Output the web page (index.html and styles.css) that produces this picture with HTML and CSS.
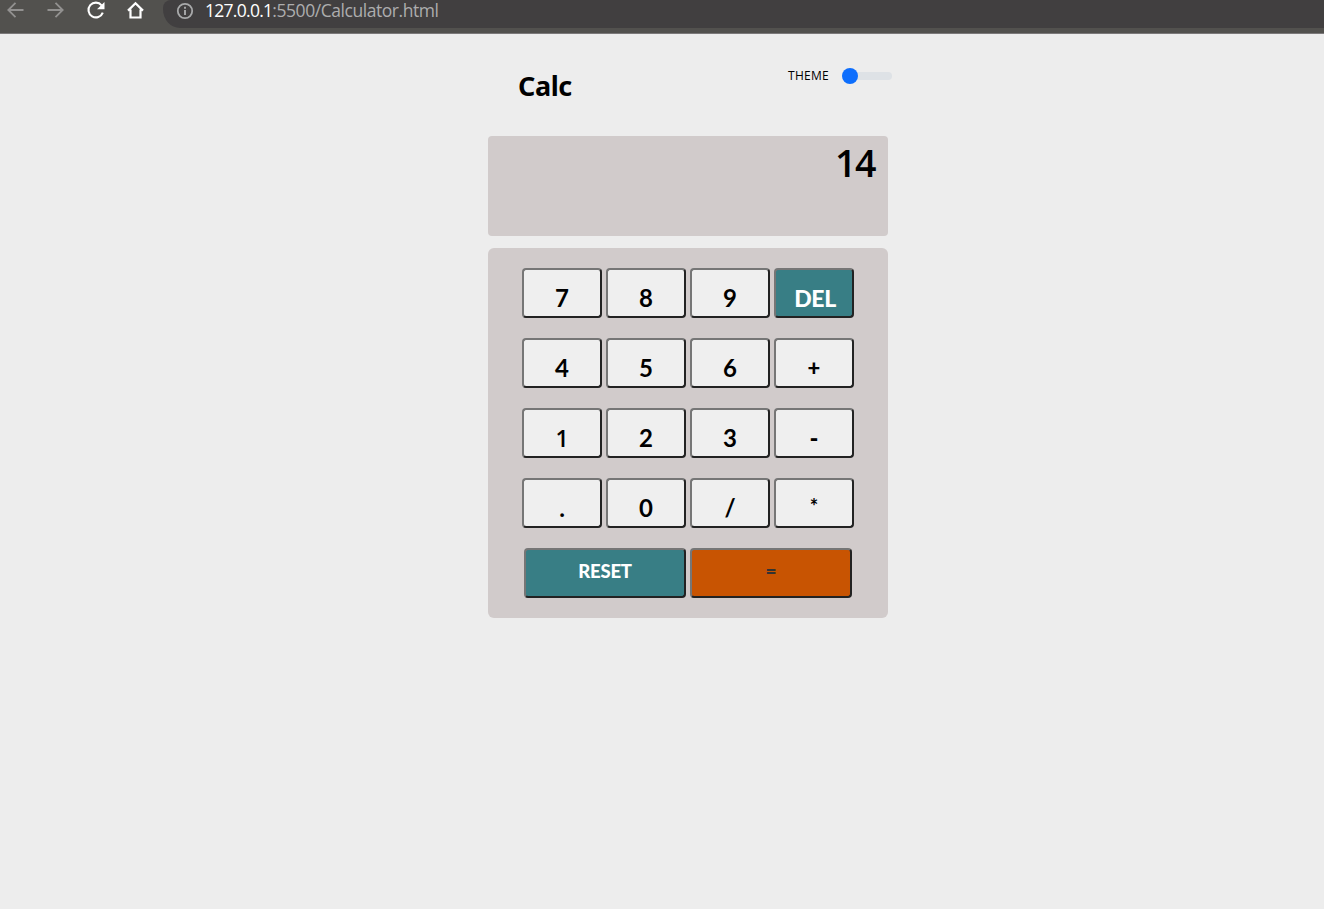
FILE: index.html
```html
<!DOCTYPE html>
<html lang="en">
<head>
<meta charset="utf-8">
<title>Calc</title>
<link rel="stylesheet" href="styles.css">
</head>
<body>
<div class="toolbar">
  <svg class="nav" width="160" height="22" viewBox="0 0 160 22" fill="none">
    <path d="M23.5 10H8.5M15.5 2.8L8.3 10l7.2 7.2" stroke="#929190" stroke-width="1.8"/>
    <path d="M47.5 10h15M55.500 2.800L62.700 10l-7.200 7.200" stroke="#929190" stroke-width="1.8"/>
    <path d="M101.600 5.300A7.400 7.400 0 1 0 102.800 12.600" stroke="#fff" stroke-width="2.100"/>
    <path d="M104.500 2v7.300H97z" fill="#fff"/>
    <path d="M128 10.600L135.500 3.300l7.500 7.300M130.500 9.500v8h10v-8" stroke="#fff" stroke-width="2.200"/>
  </svg>
  <div class="address">
    <svg class="info" width="18" height="18" viewBox="0 0 18 18" fill="none">
      <circle cx="9" cy="9" r="7.200" stroke="#a8a9aa" stroke-width="1.800"/>
      <path d="M9 8v5M9 4.800v1.900" stroke="#a8a9aa" stroke-width="1.900"/>
    </svg>
    <span class="url"><span class="host">127.0.0.1</span><span class="path">:5500/Calculator.html</span></span>
  </div>
</div>
<main class="calculator">
  <header class="header">
    <h1 class="title">Calc</h1>
    <div class="theme"><span class="theme-label">THEME</span><div class="track"><div class="thumb"></div></div></div>
  </header>
  <div class="display">14</div>
  <div class="pad">
    <div class="keys">
      <button class="key">7</button><button class="key">8</button><button class="key">9</button><button class="key del">DEL</button>
      <button class="key">4</button><button class="key">5</button><button class="key">6</button><button class="key plus">+</button>
      <button class="key one">1</button><button class="key">2</button><button class="key">3</button><button class="key minus">-</button>
      <button class="key">.</button><button class="key">0</button><button class="key slash">/</button><button class="key star">*</button>
    </div>
    <div class="actions">
      <button class="key reset">RESET</button><button class="key equals">=</button>
    </div>
  </div>
</main>
</body>
</html>
```
FILE: styles.css
```css
* { box-sizing: border-box; }
body {
  margin: 0;
  height: 909px;
  overflow: hidden;
  background: #ededed;
  color: #000;
  font-family: "Open Sans", "Noto Sans", sans-serif;
}
.toolbar {
  display: flex;
  align-items: flex-start;
  height: 34px;
  background: #52514e;
  border-bottom: 1px solid #7b797a;
}
.nav { flex: none; margin-right: 3px; }
.address {
  display: flex;
  flex: 1;
  height: 28px;
  padding: 1px 0 0 13px;
  background: #413f40;
  border-bottom-left-radius: 17px 19px;
  border-top-left-radius: 8px;
}
.info { flex: none; margin: 1px 11px 0 0; }
.url {
  color: #adadae;
  font: 17.5px/18px "Open Sans", sans-serif;
  white-space: nowrap;
}
.host { color: #fff; letter-spacing: -0.72px; }
.path { letter-spacing: -0.45px; }
.calculator { width: 400px; margin-left: 488px; }
.header {
  display: flex;
  justify-content: space-between;
  height: 102px;
  padding: 32px 0 0 30px;
}
.title { margin: 0; font: 700 27px/40px "Noto Sans", sans-serif; letter-spacing: -0.4px; }
.theme { display: flex; align-items: center; height: 20px; margin-right: -4px; }
.theme-label { width: 54px; padding-bottom: 2px; font-size: 12px; letter-spacing: 0.3px; }
.track { width: 50px; height: 8px; background: #dee2e6; border-radius: 4px; }
.thumb { width: 16px; height: 16px; margin-top: -4px; background: #0d6efd; border-radius: 50%; }
.display {
  height: 100px;
  padding: 3px 13px 0 0;
  border-radius: 4px;
  background: #d1cbcb;
  font: 600 37.5px/48px "Open Sans", sans-serif;
  letter-spacing: -1.5px;
  text-align: right;
}
.pad {
  height: 370px;
  margin-top: 12px;
  padding: 20px 34px;
  border-radius: 6px;
  background: #d1cbcb;
}
.keys { display: grid; grid-template-columns: repeat(4, 80px); gap: 20px 4px; }
.key {
  height: 50px;
  padding: 10px 0 0;
  border: 2px solid;
  border-color: #767676 #222 #222 #767676;
  border-radius: 4px;
  background: #efefef;
  color: #000;
  font: 700 24px/34px Lato, sans-serif;
}
.key.one { font-family: "Open Sans", sans-serif; font-size: 23px; font-weight: 600; padding-top: 9px; }
.key.plus { font-size: 22px; font-weight: 900; padding-top: 10px; }
.key.star { font-size: 20px; padding-top: 6px; }
.key.minus { font-weight: 900; }
.del, .reset { background: #387e85; color: #fff; }
.key.del { font-size: 23px; font-weight: 900; letter-spacing: -0.4px; padding-left: 2px; }
.actions { display: grid; grid-template-columns: 162px 162px; gap: 4px; margin: 20px 2px 0; }
.key.reset { padding: 0 0 4px; font-size: 18.5px; font-weight: 900; letter-spacing: -0.2px; }
.key.equals { padding: 0 0 4px; background: #c85402; color: #333; font-size: 19px; font-weight: 900; }
```
